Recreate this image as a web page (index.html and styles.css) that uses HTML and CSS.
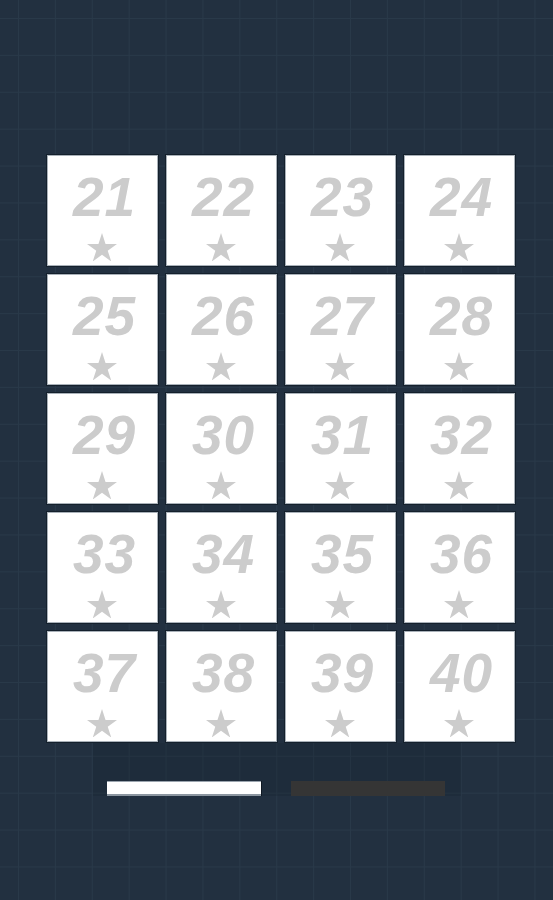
FILE: index.html
```html
<!DOCTYPE html>
<html>
<head>
<meta charset="utf-8">
<link rel="stylesheet" href="styles.css">
</head>
<body>
<div class="screen">
  <div class="levels">
    <div class="tile"><span class="num">21</span><svg class="star" viewBox="0 0 30 28.6"><polygon points="15,0 18.54,10.9 30,10.9 20.73,17.63 24.27,28.53 15,21.79 5.73,28.53 9.27,17.63 0,10.9 11.46,10.9"/></svg></div>
    <div class="tile"><span class="num">22</span><svg class="star" viewBox="0 0 30 28.6"><polygon points="15,0 18.54,10.9 30,10.9 20.73,17.63 24.27,28.53 15,21.79 5.73,28.53 9.27,17.63 0,10.9 11.46,10.9"/></svg></div>
    <div class="tile"><span class="num">23</span><svg class="star" viewBox="0 0 30 28.6"><polygon points="15,0 18.54,10.9 30,10.9 20.73,17.63 24.27,28.53 15,21.79 5.73,28.53 9.27,17.63 0,10.9 11.46,10.9"/></svg></div>
    <div class="tile"><span class="num">24</span><svg class="star" viewBox="0 0 30 28.6"><polygon points="15,0 18.54,10.9 30,10.9 20.73,17.63 24.27,28.53 15,21.79 5.73,28.53 9.27,17.63 0,10.9 11.46,10.9"/></svg></div>
    <div class="tile"><span class="num">25</span><svg class="star" viewBox="0 0 30 28.6"><polygon points="15,0 18.54,10.9 30,10.9 20.73,17.63 24.27,28.53 15,21.79 5.73,28.53 9.27,17.63 0,10.9 11.46,10.9"/></svg></div>
    <div class="tile"><span class="num">26</span><svg class="star" viewBox="0 0 30 28.6"><polygon points="15,0 18.54,10.9 30,10.9 20.73,17.63 24.27,28.53 15,21.79 5.73,28.53 9.27,17.63 0,10.9 11.46,10.9"/></svg></div>
    <div class="tile"><span class="num">27</span><svg class="star" viewBox="0 0 30 28.6"><polygon points="15,0 18.54,10.9 30,10.9 20.73,17.63 24.27,28.53 15,21.79 5.73,28.53 9.27,17.63 0,10.9 11.46,10.9"/></svg></div>
    <div class="tile"><span class="num">28</span><svg class="star" viewBox="0 0 30 28.6"><polygon points="15,0 18.54,10.9 30,10.9 20.73,17.63 24.27,28.53 15,21.79 5.73,28.53 9.27,17.63 0,10.9 11.46,10.9"/></svg></div>
    <div class="tile"><span class="num">29</span><svg class="star" viewBox="0 0 30 28.6"><polygon points="15,0 18.54,10.9 30,10.9 20.73,17.63 24.27,28.53 15,21.79 5.73,28.53 9.27,17.63 0,10.9 11.46,10.9"/></svg></div>
    <div class="tile"><span class="num">30</span><svg class="star" viewBox="0 0 30 28.6"><polygon points="15,0 18.54,10.9 30,10.9 20.73,17.63 24.27,28.53 15,21.79 5.73,28.53 9.27,17.63 0,10.9 11.46,10.9"/></svg></div>
    <div class="tile"><span class="num">31</span><svg class="star" viewBox="0 0 30 28.6"><polygon points="15,0 18.54,10.9 30,10.9 20.73,17.63 24.27,28.53 15,21.79 5.73,28.53 9.27,17.63 0,10.9 11.46,10.9"/></svg></div>
    <div class="tile"><span class="num">32</span><svg class="star" viewBox="0 0 30 28.6"><polygon points="15,0 18.54,10.9 30,10.9 20.73,17.63 24.27,28.53 15,21.79 5.73,28.53 9.27,17.63 0,10.9 11.46,10.9"/></svg></div>
    <div class="tile"><span class="num">33</span><svg class="star" viewBox="0 0 30 28.6"><polygon points="15,0 18.54,10.9 30,10.9 20.73,17.63 24.27,28.53 15,21.79 5.73,28.53 9.27,17.63 0,10.9 11.46,10.9"/></svg></div>
    <div class="tile"><span class="num">34</span><svg class="star" viewBox="0 0 30 28.6"><polygon points="15,0 18.54,10.9 30,10.9 20.73,17.63 24.27,28.53 15,21.79 5.73,28.53 9.27,17.63 0,10.9 11.46,10.9"/></svg></div>
    <div class="tile"><span class="num">35</span><svg class="star" viewBox="0 0 30 28.6"><polygon points="15,0 18.54,10.9 30,10.9 20.73,17.63 24.27,28.53 15,21.79 5.73,28.53 9.27,17.63 0,10.9 11.46,10.9"/></svg></div>
    <div class="tile"><span class="num">36</span><svg class="star" viewBox="0 0 30 28.6"><polygon points="15,0 18.54,10.9 30,10.9 20.73,17.63 24.27,28.53 15,21.79 5.73,28.53 9.27,17.63 0,10.9 11.46,10.9"/></svg></div>
    <div class="tile"><span class="num">37</span><svg class="star" viewBox="0 0 30 28.6"><polygon points="15,0 18.54,10.9 30,10.9 20.73,17.63 24.27,28.53 15,21.79 5.73,28.53 9.27,17.63 0,10.9 11.46,10.9"/></svg></div>
    <div class="tile"><span class="num">38</span><svg class="star" viewBox="0 0 30 28.6"><polygon points="15,0 18.54,10.9 30,10.9 20.73,17.63 24.27,28.53 15,21.79 5.73,28.53 9.27,17.63 0,10.9 11.46,10.9"/></svg></div>
    <div class="tile"><span class="num">39</span><svg class="star" viewBox="0 0 30 28.6"><polygon points="15,0 18.54,10.9 30,10.9 20.73,17.63 24.27,28.53 15,21.79 5.73,28.53 9.27,17.63 0,10.9 11.46,10.9"/></svg></div>
    <div class="tile"><span class="num">40</span><svg class="star" viewBox="0 0 30 28.6"><polygon points="15,0 18.54,10.9 30,10.9 20.73,17.63 24.27,28.53 15,21.79 5.73,28.53 9.27,17.63 0,10.9 11.46,10.9"/></svg></div>
  </div>
  <div class="pager">
    <div class="bar bar-active"></div>
    <div class="bar bar-idle"></div>
  </div>
</div>
</body>
</html>
```
FILE: styles.css
```css
html, body {
  margin: 0;
  padding: 0;
}
body {
  width: 553px;
  height: 900px;
  overflow: hidden;
  background-color: #223040;
  background-image:
    linear-gradient(to right, #293949 1px, transparent 1px),
    linear-gradient(to bottom, #293949 1px, transparent 1px);
  background-size: 36.9px 36.9px;
  background-position: 18px 18px;
  font-family: "Liberation Sans", Arial, sans-serif;
}
.screen {
  display: flex;
  flex-direction: column;
  padding-top: 155px;
  padding-left: 47px;
}
.levels {
  display: grid;
  grid-template-columns: repeat(4, 111px);
  grid-auto-rows: 111px;
  gap: 8px;
}
.tile {
  box-sizing: border-box;
  background: #ffffff;
  border: 1px solid #a9b1b9;
  box-shadow: 0 0 0 1px #14202c;
  display: flex;
  flex-direction: column;
  align-items: center;
  padding-top: 14px;
}
.num {
  font-family: "Liberation Sans", Arial, sans-serif;
  font-weight: bold;
  font-style: italic;
  font-size: 55px;
  line-height: 55px;
  height: 55px;
  color: #cccccc;
  letter-spacing: 1px;
  margin-left: 4px;
}
.star {
  width: 30px;
  height: 28.6px;
  margin-top: 7.5px;
  margin-left: -2px;
  fill: #cccccc;
}
.pager {
  margin-top: 1px;
  margin-left: 46px;
  width: 368px;
  height: 53px;
  box-sizing: border-box;
  padding: 38px 16px 0 14px;
  display: flex;
  gap: 30px;
  background: rgba(20, 30, 40, 0.22);
}
.bar {
  width: 154px;
  height: 15px;
  box-sizing: border-box;
}
.bar-active {
  background: #ffffff;
  border-top: 1px solid #9aa4ae;
  border-bottom: 2px solid #8c96a0;
  box-shadow: 1px 0 0 #0f1822;
}
.bar-idle {
  background: #353535;
}
```
